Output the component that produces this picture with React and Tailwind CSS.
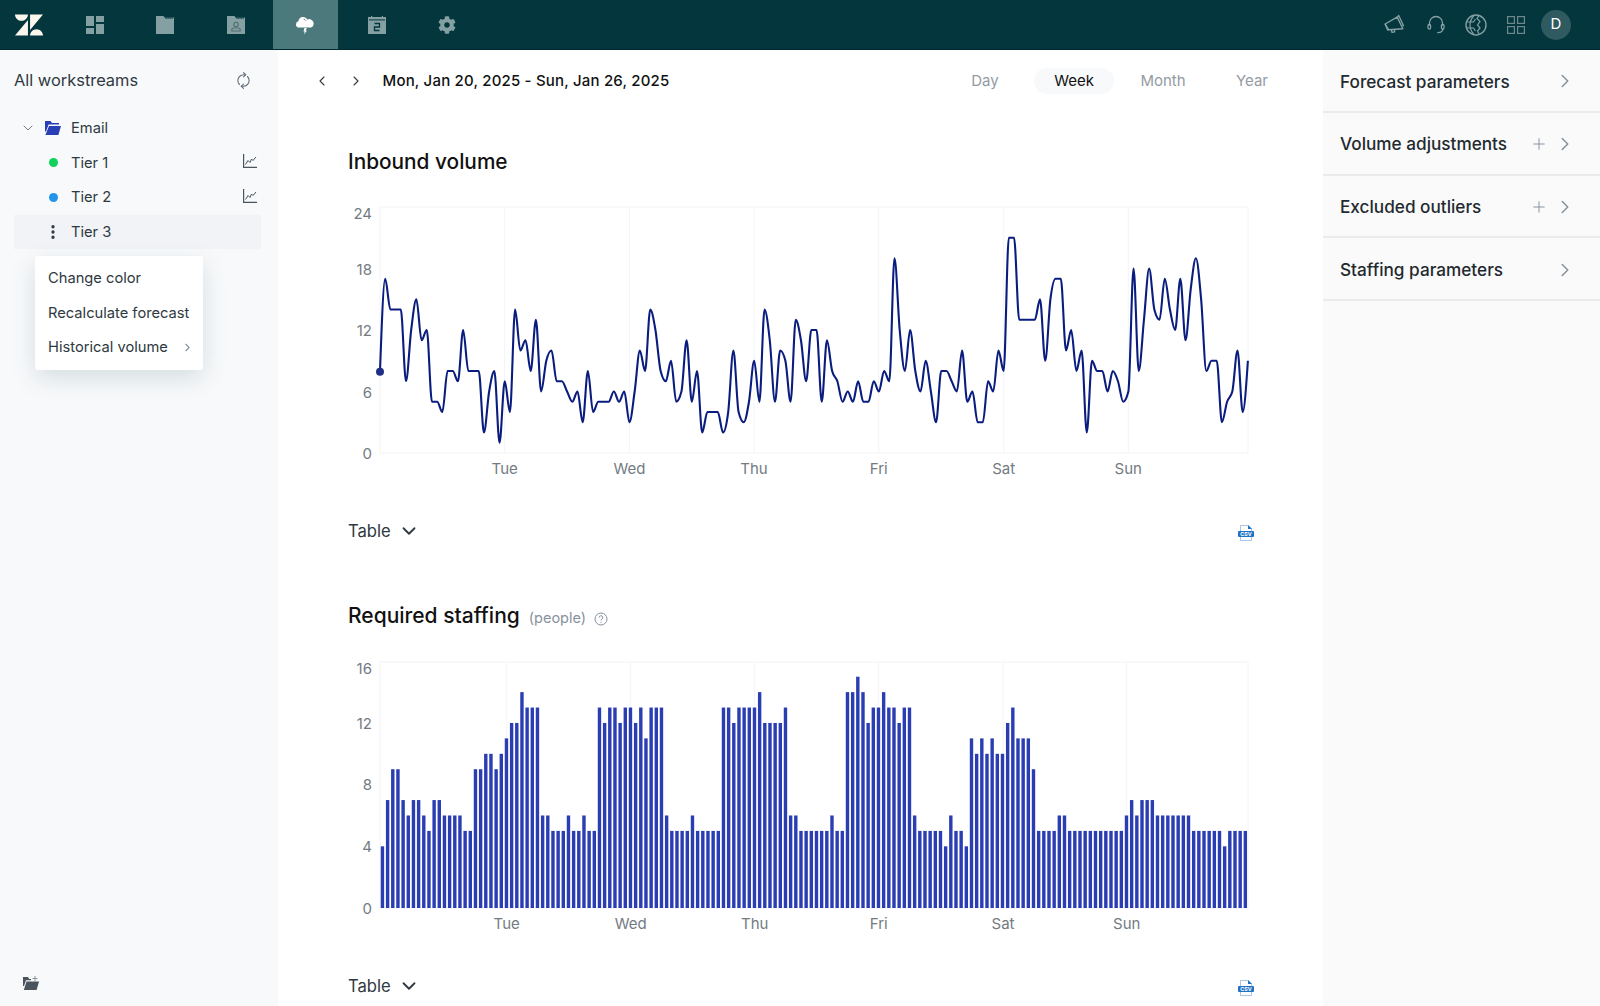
import { ChevronDown, ChevronLeft, ChevronRight, EllipsisVertical, Plus, RefreshCw } from 'lucide-react';
import { FaCog } from 'react-icons/fa';

const inbound = [
    8, 17, 14, 14, 14, 7, 12, 15, 11, 12, 5, 5, 4, 8, 8, 7, 12, 8, 8, 8, 2, 6, 8, 1,
    7, 4, 14, 10, 11, 8, 13, 6, 9, 10, 7, 7, 6, 5, 6, 3, 8, 4, 5, 5, 5, 6, 5, 6,
    3, 6, 10, 8, 14, 12, 8, 7, 9, 5, 6, 11, 5, 8, 2, 4, 4, 4, 2, 4, 10, 4, 3, 5,
    9, 5, 14, 11, 5, 10, 9, 5, 13, 11, 7, 12, 12, 5, 11, 8, 7, 5, 6, 5, 7, 5, 5, 7,
    6, 8, 7, 19, 12, 8, 12, 8, 6, 9, 6, 3, 8, 8, 7, 6, 10, 5, 6, 3, 3, 7, 6, 10,
    8, 21, 21, 13, 13, 13, 13, 15, 9, 15, 17, 17, 10, 12, 8, 10, 2, 9, 8, 8, 6, 8, 7, 5,
    6, 18, 8, 13, 18, 14, 13, 17, 14, 12, 17, 11, 16, 19, 15, 8, 9, 9, 3, 5, 6, 10, 4, 9,
];

const staffing = [
    4, 7, 9, 9, 7, 6, 7, 7, 6, 5, 7, 7, 6, 6, 6, 6, 5, 5, 9, 9, 10, 10, 9, 10,
    11, 12, 12, 14, 13, 13, 13, 6, 6, 5, 5, 5, 6, 5, 5, 6, 5, 5, 13, 12, 13, 13, 12, 13,
    13, 12, 13, 11, 13, 13, 13, 6, 5, 5, 5, 5, 6, 5, 5, 5, 5, 5, 13, 13, 12, 13, 13, 13,
    13, 14, 12, 12, 12, 12, 13, 6, 6, 5, 5, 5, 5, 5, 5, 6, 5, 5, 14, 14, 15, 14, 12, 13,
    13, 14, 13, 13, 12, 13, 13, 6, 5, 5, 5, 5, 5, 4, 6, 5, 5, 4, 11, 10, 11, 10, 11, 10,
    10, 12, 13, 11, 11, 11, 9, 5, 5, 5, 5, 6, 6, 5, 5, 5, 5, 5, 5, 5, 5, 5, 5, 5,
    6, 7, 6, 7, 7, 7, 6, 6, 6, 6, 6, 6, 6, 5, 5, 5, 5, 5, 5, 4, 5, 5, 5, 5,
];

const plotLeft = 32;
const plotRight = 900;
const plotTop = 7;
const plotBottom = 253;
const days = ['Tue', 'Wed', 'Thu', 'Fri', 'Sat', 'Sun'];

// same tangents as d3's curveMonotoneX, the flat tops stay flat
function monotonePath(points) {
    const sign = (v) => (v < 0 ? -1 : 1);
    const tangents = points.map((p, i) => {
        if (i === 0 || i === points.length - 1) return null;
        const h0 = p[0] - points[i - 1][0];
        const h1 = points[i + 1][0] - p[0];
        const s0 = (p[1] - points[i - 1][1]) / h0;
        const s1 = (points[i + 1][1] - p[1]) / h1;
        const mid = (s0 * h1 + s1 * h0) / (h0 + h1);
        return (sign(s0) + sign(s1)) * Math.min(Math.abs(s0), Math.abs(s1), 0.5 * Math.abs(mid)) || 0;
    });
    const last = points.length - 1;
    tangents[0] = (3 * (points[1][1] - points[0][1]) / (points[1][0] - points[0][0]) - tangents[1]) / 2;
    tangents[last] = (3 * (points[last][1] - points[last - 1][1]) / (points[last][0] - points[last - 1][0]) - tangents[last - 1]) / 2;

    let d = `M${points[0][0]},${points[0][1]}`;
    for (let i = 1; i < points.length; i += 1) {
        const dx = (points[i][0] - points[i - 1][0]) / 3;
        d += `C${points[i - 1][0] + dx},${points[i - 1][1] + dx * tangents[i - 1]},${points[i][0] - dx},${points[i][1] - dx * tangents[i]},${points[i][0]},${points[i][1]}`;
    }
    return d;
}

function ChartFrame({ ticks, gridX, className, children }) {
    return (
        <svg width="912" height="280" className={`block ${className}`} style={{ fontFamily: 'Inter, sans-serif' }}>
            <rect x={plotLeft} y={plotTop} width={plotRight - plotLeft} height={plotBottom - plotTop} fill="none" stroke="#f3f4f8" />
            {gridX.map((x) => (
                <line key={x} x1={x} x2={x} y1={plotTop} y2={plotBottom} stroke="#f3f4f8" />
            ))}
            {ticks.map((tick) => (
                <text key={tick.label} x="24" y={tick.y} textAnchor="end" dominantBaseline="middle" fontSize="15" fill="#737b82">
                    {tick.label}
                </text>
            ))}
            {gridX.map((x, i) => (
                <text key={days[i]} x={x} y="270" textAnchor="middle" dominantBaseline="middle" fontSize="15" fill="#737b82">
                    {days[i]}
                </text>
            ))}
            {children}
        </svg>
    );
}

function InboundChart() {
    const points = inbound.map((value, i) => [plotLeft + i * 5.197, plotBottom - value * 10.25]);
    return (
        <ChartFrame
            className="mt-[25px]"
            gridX={[156.7, 281.4, 406, 530.7, 655.7, 780.3]}
            ticks={[
                { label: '24', y: 15 },
                { label: '18', y: 71 },
                { label: '12', y: 132 },
                { label: '6', y: 193.5 },
                { label: '0', y: 255 },
            ]}
        >
            <path d={monotonePath(points)} fill="none" stroke="#0a1d7f" strokeWidth="2.1" />
            <circle cx={plotLeft} cy={plotBottom - 8 * 10.15} r="4" fill="#1f2f86" />
        </ChartFrame>
    );
}

function StaffingChart() {
    return (
        <ChartFrame
            className="mt-[26px]"
            gridX={[158.7, 282.7, 406.7, 530.7, 655, 778.7]}
            ticks={[
                { label: '16', y: 14.5 },
                { label: '12', y: 69.5 },
                { label: '8', y: 131 },
                { label: '4', y: 193 },
                { label: '0', y: 255 },
            ]}
        >
            {staffing.map((value, i) => (
                <rect
                    key={i}
                    x={plotLeft + 0.75 + i * 5.167}
                    y={plotBottom - value * 15.42}
                    width="3.4"
                    height={value * 15.42}
                    fill="#2a3db3"
                />
            ))}
        </ChartFrame>
    );
}

function ZendeskLogo() {
    return (
        <svg width="28" height="28" viewBox="0 0 24 24" fill="#fbf7ec">
            <path d="M12.914 2.904V16.29L24 2.905H12.914zM0 2.906C0 5.966 2.483 8.45 5.543 8.45s5.542-2.484 5.543-5.544H0zm11.086 4.807L0 21.096h11.086V7.713zm7.37 7.84c-3.063 0-5.542 2.48-5.542 5.543H24c0-3.06-2.48-5.543-5.543-5.543z" />
        </svg>
    );
}

function DashboardIcon() {
    return (
        <svg width="18" height="18" viewBox="0 0 18 18" fill="#85a0a3">
            <rect x="0" y="0" width="8" height="10" />
            <rect x="10" y="0" width="8" height="6" />
            <rect x="0" y="12" width="8" height="6" />
            <rect x="10" y="8" width="8" height="10" />
        </svg>
    );
}

function FolderIcon() {
    return (
        <svg width="18" height="18" viewBox="0 0 18 18" fill="#85a0a3">
            <path d="M0 0h7.5l1 1.5H18V18H0z" />
            <rect x="9" y="1.5" width="8" height="1" fill="#03363d" />
        </svg>
    );
}

function ContactsIcon() {
    return (
        <svg width="18" height="18" viewBox="0 0 18 18">
            <path d="M0 0h7.5l1 1.5H18V18H0z" fill="#85a0a3" />
            <rect x="9" y="1.5" width="8" height="1" fill="#03363d" />
            <circle cx="9" cy="8.5" r="2.2" fill="none" stroke="#4e6d71" strokeWidth="1.1" />
            <path d="M4.8 15v-1.2c0-1 1-1.8 2-1.8h4.4c1 0 2 .8 2 1.8V15z" fill="none" stroke="#4e6d71" strokeWidth="1.1" />
        </svg>
    );
}

function ForecastIcon() {
    return (
        <svg width="20" height="20" viewBox="0 0 20 20" fill="#ffffff">
            <path d="M4 12.6a3.2 3.2 0 0 1-.6-6.3 4.8 4.8 0 0 1 9-1.8 4 4 0 0 1 3.6 8.1z" />
            <path d="M8.6 4.2a2.6 2.6 0 0 1 2.4 1.6" fill="none" stroke="#4c7a7c" strokeWidth="0.8" />
            <path d="M9.4 13h2.4l-1.2 2.4H12l-2.9 4.1.7-3.1H8.5z" />
        </svg>
    );
}

function CalendarIcon() {
    return (
        <svg width="18" height="18" viewBox="0 0 18 18">
            <path d="M0 1h3V0h1.2v1h9.6V0H15v1h3v17H0z" fill="#85a0a3" />
            <rect x="1" y="3.4" width="16" height="1" fill="#03363d" />
            <path d="M6.5 7.5h5v3.5h-5v3.5h5" fill="none" stroke="#03363d" strokeWidth="1.3" />
        </svg>
    );
}

function MegaphoneIcon() {
    return (
        <svg width="21" height="21" viewBox="0 0 20 20" fill="none" stroke="#85a0a3" strokeWidth="1.3" strokeLinejoin="round">
            <path d="M1 9.5l11.5-6.5 5.5 11-13.5 1z" />
            <path d="M1 9.5l2.5 5.7 1-.2" />
            <path d="M12.5 3l1.5-1.5 4.5 9.5-1 .5" />
            <path d="M7 15l.6 2.5 2.6-.5-.4-2.3" />
        </svg>
    );
}

function HeadsetIcon() {
    return (
        <svg width="20" height="20" viewBox="0 0 20 20" fill="none" stroke="#85a0a3" strokeWidth="1.3" strokeLinecap="round">
            <path d="M3.5 10V8a6.5 6.5 0 0 1 13 0v2" />
            <rect x="2" y="9.5" width="2.6" height="4.5" rx="1.2" />
            <rect x="15.4" y="9.5" width="2.6" height="4.5" rx="1.2" />
            <path d="M16.8 14c0 2-1.8 3.5-5 3.7" />
        </svg>
    );
}

function GlobeIcon() {
    return (
        <svg width="22" height="22" viewBox="0 0 22 22" fill="none" stroke="#85a0a3" strokeWidth="1.4">
            <circle cx="11" cy="11" r="10" />
            <path d="M9 1.5C5.8 5 5 8 5 11s.8 6 4 9.5M1.5 8h7l2-3M1.5 14h7l2 3M14 1.5l-2 3 3 3-2.5 3.5 2.5 3-2.5 3 1.5 3" strokeWidth="1.2" />
        </svg>
    );
}

function AppsIcon() {
    return (
        <svg width="18" height="18" viewBox="0 0 18 18" fill="none" stroke="#6d878b" strokeWidth="1.2">
            <rect x="0.6" y="0.6" width="6.8" height="6.8" />
            <rect x="10.6" y="0.6" width="6.8" height="6.8" />
            <rect x="0.6" y="10.6" width="6.8" height="6.8" />
            <rect x="10.6" y="10.6" width="6.8" height="6.8" />
        </svg>
    );
}

function OpenFolderIcon() {
    return (
        <svg width="16" height="14" viewBox="0 0 16 14" fill="#2a3fb5">
            <path d="M0 0h5.5L7 2h7v1.6H3.6L1 10.5H0z" />
            <path d="M4 5h12l-2.6 9H0.4z" />
        </svg>
    );
}

function TrendIcon() {
    return (
        <svg width="14" height="14" viewBox="0 0 14 14" fill="none" stroke="#49545c" strokeWidth="1" className="mb-[3px]">
            <path d="M.6 0v13.4H14" strokeWidth="1.2" />
            <path d="M2.5 10.5l2.5-4 2 2 1.5-3.5 1.5 1.5L13 3" />
        </svg>
    );
}

function CsvIcon() {
    return (
        <svg width="16" height="16" viewBox="0 0 16 16">
            <path d="M2.5 .5h8l3 3v12h-11z" fill="#ffffff" stroke="#a9c4e8" />
            <path d="M10 0l4 4h-4z" fill="#1f73c4" />
            <rect x="0" y="6" width="16" height="6" rx="1" fill="#1f73c4" />
            <text x="8" y="11" textAnchor="middle" fontSize="5.4" fontWeight="700" fill="#ffffff" style={{ fontFamily: 'Inter, sans-serif' }}>
                CSV
            </text>
        </svg>
    );
}

function NewFolderIcon() {
    return (
        <svg width="16" height="14" viewBox="0 0 16 14">
            <path d="M0 1h5l1.2 2H8v1.2H3L1 10H0z" fill="#49545c" />
            <path d="M3.5 5.5H16L13.6 14H.8z" fill="#49545c" />
            <path d="M12 0v5M9.5 2.5h5" stroke="#87929d" strokeWidth="1" fill="none" />
        </svg>
    );
}

function HelpIcon() {
    return (
        <svg width="14" height="14" viewBox="0 0 14 14" fill="none" stroke="#87929d" strokeWidth="1">
            <circle cx="7" cy="7" r="6" />
            <path d="M5.2 5.6a1.8 1.8 0 1 1 2.7 1.5c-.6.4-.9.7-.9 1.4" />
            <circle cx="7" cy="10.3" r=".6" fill="#87929d" stroke="none" />
        </svg>
    );
}

const navTabs = [
    { id: 'dashboard', icon: <DashboardIcon /> },
    { id: 'folder', icon: <FolderIcon /> },
    { id: 'contacts', icon: <ContactsIcon /> },
    { id: 'forecast', icon: <ForecastIcon />, active: true },
    { id: 'calendar', icon: <CalendarIcon /> },
    { id: 'settings', icon: <FaCog size={18} color="#85a0a3" /> },
];

const parameters = [
    { label: 'Forecast parameters' },
    { label: 'Volume adjustments', add: true },
    { label: 'Excluded outliers', add: true },
    { label: 'Staffing parameters' },
];

function TableRow() {
    return (
        <div className="mt-[38px] flex h-[26px] w-[912px] items-center justify-between">
            <div className="flex items-center gap-[7px] text-[16.6px] text-[#2f3941]">
                Table
                <ChevronDown size={22} strokeWidth={2} className="text-[#2f3941]" />
            </div>
            <div className="mr-[6px] mt-[3px] flex items-center">
                <CsvIcon />
            </div>
        </div>
    );
}

export default function App() {
    return (
        <div className="flex h-screen flex-col overflow-hidden bg-white font-['Inter',sans-serif] text-[#2f3941]">
            <header className="flex h-[50px] shrink-0 items-center border-b border-[#02292f] bg-[#03363d]">
                <div className="ml-[15px] flex w-[47px] items-center">
                    <ZendeskLogo />
                </div>
                <nav className="flex h-full gap-[5.5px]">
                    {navTabs.map((tab) => (
                        <div
                            key={tab.id}
                            className={`flex w-[65px] items-center justify-center ${tab.active ? '-ml-px mr-px bg-[#4c7a7c]' : ''}`}
                        >
                            {tab.icon}
                        </div>
                    ))}
                </nav>
                <div className="ml-auto mr-[29px] flex items-center">
                    <div className="flex w-[42px] justify-center"><MegaphoneIcon /></div>
                    <div className="flex w-[42px] justify-center"><HeadsetIcon /></div>
                    <div className="flex w-[38px] justify-center"><GlobeIcon /></div>
                    <div className="flex w-[42px] justify-center"><AppsIcon /></div>
                    <div className="ml-[4px] flex h-[30px] w-[30px] items-center justify-center rounded-full bg-[#2f5a60] text-[15px] text-white">D</div>
                </div>
            </header>

            <div className="flex min-h-0 flex-1">
                <aside className="relative flex w-[278px] shrink-0 flex-col bg-[#f8f9fb]">
                    <div className="flex h-[61px] items-center justify-between pl-[14px] pr-[27px]">
                        <span className="text-[16.4px] text-[#2f3941]">All workstreams</span>
                        <RefreshCw size={15} strokeWidth={1.8} className="-rotate-45 text-[#68737d]" />
                    </div>
                    <div className="mx-[14px] flex w-[247px] flex-col text-[14.7px]">
                        <div className="flex h-[34.5px] items-center">
                            <ChevronDown size={16} strokeWidth={1.4} className="ml-[6px] mr-[9px] text-[#68737d]" />
                            <OpenFolderIcon />
                            <span className="ml-[10px]">Email</span>
                        </div>
                        <div className="flex h-[34.5px] items-center justify-between pr-[4px]">
                            <div className="flex items-center">
                                <span className="ml-[34.5px] h-[9px] w-[9px] rounded-full bg-[#10d15a]" />
                                <span className="ml-[13.5px]">Tier 1</span>
                            </div>
                            <TrendIcon />
                        </div>
                        <div className="flex h-[34.5px] items-center justify-between pr-[4px]">
                            <div className="flex items-center">
                                <span className="ml-[34.5px] h-[9px] w-[9px] rounded-full bg-[#2394ea]" />
                                <span className="ml-[13.5px]">Tier 2</span>
                            </div>
                            <TrendIcon />
                        </div>
                        <div className="flex h-[34.5px] items-center bg-[#f1f3f6]">
                            <EllipsisVertical size={18} strokeWidth={2.4} className="ml-[30px] text-[#2f3941]" />
                            <span className="ml-[9px]">Tier 3</span>
                        </div>
                    </div>
                    <div className="absolute left-[35px] top-[206px] w-[168px] rounded-[3px] bg-white py-[5px] text-[14.7px] text-[#2f3941] shadow-[0_8px_24px_rgba(23,73,77,0.15)]">
                        <div className="flex h-[34.5px] items-center pl-[13px]">Change color</div>
                        <div className="flex h-[34.5px] items-center pl-[13px]">Recalculate forecast</div>
                        <div className="flex h-[34.5px] items-center justify-between pl-[13px] pr-[9px]">
                            Historical volume
                            <ChevronRight size={13} className="text-[#87929d]" />
                        </div>
                    </div>
                    <div className="mb-[16px] ml-[23px] mt-auto">
                        <NewFolderIcon />
                    </div>
                </aside>

                <main className="min-w-0 flex-1 overflow-hidden">
                    <div className="flex h-[62px] items-center justify-between pl-[36px] pr-[31px]">
                        <div className="flex items-center">
                            <ChevronLeft size={16} strokeWidth={1.6} />
                            <ChevronRight size={16} strokeWidth={1.6} className="ml-[18px]" />
                            <span className="ml-[18.5px] text-[15px] font-medium tracking-[0.19px] text-[#111]">
                                Mon, Jan 20, 2025 - Sun, Jan 26, 2025
                            </span>
                        </div>
                        <div className="flex gap-[9px] text-[15px] text-[#939ba3]">
                            <span className="flex h-[26px] w-[80px] items-center justify-center">Day</span>
                            <span className="flex h-[26px] w-[80px] items-center justify-center rounded-full bg-[#f8f9fb] text-[#111]">Week</span>
                            <span className="flex h-[26px] w-[80px] items-center justify-center">Month</span>
                            <span className="flex h-[26px] w-[80px] items-center justify-center">Year</span>
                        </div>
                    </div>

                    <section className="pl-[70px]">
                        <h2 className="mt-[37px] flex h-[26px] items-center text-[20.8px] font-medium text-[#111]">Inbound volume</h2>
                        <InboundChart />
                        <TableRow />

                        <div className="mt-[59px] flex h-[26px] items-center">
                            <h2 className="text-[21px] font-medium text-[#111]">Required staffing</h2>
                            <span className="ml-[9px] mt-[4px] text-[14.5px] text-[#87929d]">(people)</span>
                            <span className="ml-[8px] mt-[5px]"><HelpIcon /></span>
                        </div>
                        <StaffingChart />
                        <TableRow />
                    </section>
                </main>

                <aside className="w-[277px] shrink-0 bg-[#fafafa]">
                    {parameters.map((item) => (
                        <div key={item.label} className="flex h-[62.8px] items-center justify-between border-b-2 border-[#e9ebed] pl-[17px] pr-[24px] pt-[2px]">
                            <span className="text-[17.2px] font-medium text-[#1f2a30]">{item.label}</span>
                            <div className="flex items-center gap-[6px] text-[#87929d]">
                                {item.add && <Plus size={18} strokeWidth={1.3} />}
                                <ChevronRight size={22} strokeWidth={1.7} />
                            </div>
                        </div>
                    ))}
                </aside>
            </div>
        </div>
    );
}
